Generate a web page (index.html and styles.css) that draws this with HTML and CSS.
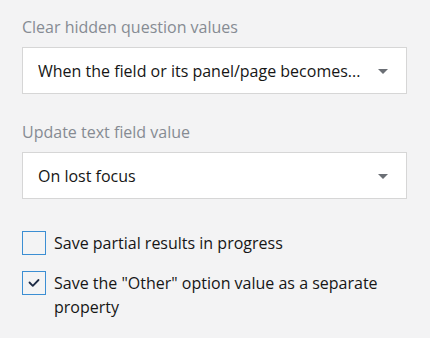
FILE: index.html
```html
<!DOCTYPE html>
<html>
<head>
<meta charset="utf-8">
<link rel="stylesheet" href="styles.css">
</head>
<body>
<div class="panel">
  <div class="field">
    <div class="label">Clear hidden question values</div>
    <div class="dropdown">
      <span class="value">When the field or its panel/page becomes...</span>
      <span class="arrow"></span>
    </div>
  </div>
  <div class="field">
    <div class="label">Update text field value</div>
    <div class="dropdown">
      <span class="value">On lost focus</span>
      <span class="arrow"></span>
    </div>
  </div>
  <div class="checks">
    <div class="check">
      <span class="box"></span>
      <span class="text">Save partial results in progress</span>
    </div>
    <div class="check">
      <span class="box">
        <svg width="12" height="10" viewBox="0 0 12 10"><polyline points="1.5,4.5 4.8,7.8 10.5,2" fill="none" stroke="#1d2a44" stroke-width="1.8" stroke-linecap="round" stroke-linejoin="round"/></svg>
      </span>
      <span class="text">Save the "Other" option value as a separate property</span>
    </div>
  </div>
</div>
</body>
</html>
```

FILE: styles.css
```css
html, body {
  margin: 0;
  padding: 0;
  background: #f3f3f4;
}
body {
  font-family: "Open Sans", "Noto Sans", sans-serif;
  font-size: 16px;
  line-height: 24px;
  color: #161616;
}
.panel {
  padding: 15px 23px 0 22px;
  display: flex;
  flex-direction: column;
  gap: 26px;
}
.field {
  display: flex;
  flex-direction: column;
  gap: 8px;
}
.label {
  color: #868b93;
}
.dropdown {
  height: 47px;
  box-sizing: border-box;
  background: #ffffff;
  border: 1px solid #d6d6d6;
  display: flex;
  align-items: center;
  padding: 0 18px 0 15px;
}
.value {
  flex: 1;
  white-space: nowrap;
  overflow: hidden;
}
.arrow {
  width: 0;
  height: 0;
  border-left: 5px solid transparent;
  border-right: 5px solid transparent;
  border-top: 5px solid #6b6f75;
  margin-top: 1px;
}
.checks {
  display: flex;
  flex-direction: column;
  gap: 16px;
  padding-top: 6px;
}
.check {
  display: flex;
  align-items: flex-start;
  gap: 8px;
}
.box {
  flex: none;
  width: 24px;
  height: 24px;
  box-sizing: border-box;
  border: 1px solid #3b8ed3;
  display: flex;
  align-items: center;
  justify-content: center;
}
.text {
  padding-right: 20px;
}
```
